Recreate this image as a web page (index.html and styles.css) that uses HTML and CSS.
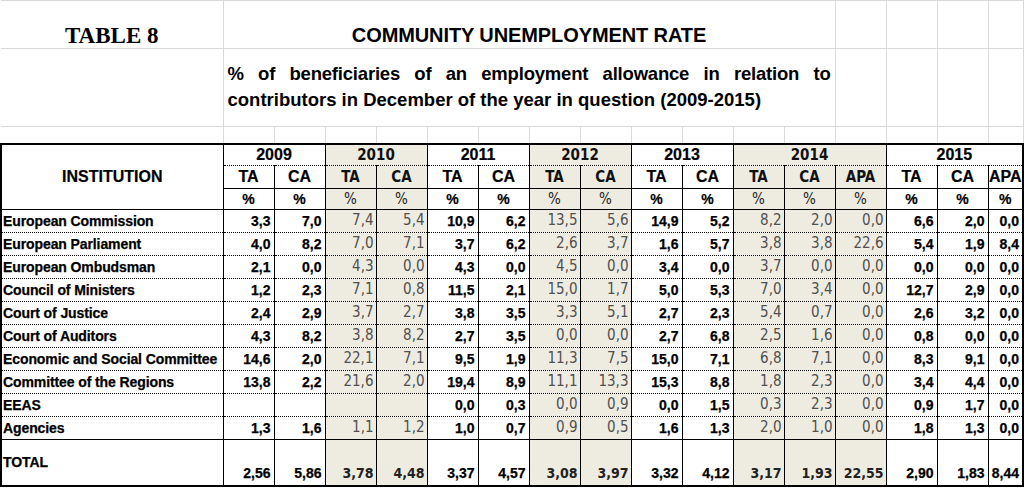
FILE: index.html
```html
<!DOCTYPE html>
<html>
<head>
<meta charset="utf-8">
<link rel="stylesheet" href="styles.css">
</head>
<body>
<table class="sheet">
<colgroup>
<col class="c-inst">
<col><col><col><col><col><col><col><col><col><col><col><col><col>
<col><col><col class="c-last">
</colgroup>
<tbody>
<tr class="r1">
<td class="label">TABLE 8</td>
<td colspan="12" class="title">COMMUNITY UNEMPLOYMENT RATE</td>
<td></td><td></td><td></td><td></td>
</tr>
<tr class="r2">
<td></td>
<td colspan="12" class="subtitle">
<span class="line1">% of beneficiaries of an employment allowance in relation to</span>
<span class="line2">contributors in December of the year in question (2009-2015)</span>
</td>
<td></td><td></td><td></td><td></td>
</tr>
<tr class="r3">
<td></td><td></td><td></td><td></td><td></td><td></td><td></td><td></td><td></td><td></td><td></td><td></td><td></td><td></td><td></td><td></td><td></td>
</tr>
<tr class="h h1">
<td rowspan="3" class="inst-head first">INSTITUTION</td>
<td colspan="2">2009</td>
<td colspan="2" class="s">2010</td>
<td colspan="2">2011</td>
<td colspan="2" class="s">2012</td>
<td colspan="2">2013</td>
<td colspan="3" class="s">2014</td>
<td colspan="3" class="last">2015</td>
</tr>
<tr class="h h2">
<td>TA</td><td>CA</td>
<td class="s">TA</td><td class="s">CA</td>
<td>TA</td><td>CA</td>
<td class="s">TA</td><td class="s">CA</td>
<td>TA</td><td>CA</td>
<td class="s">TA</td><td class="s">CA</td><td class="s">APA</td>
<td>TA</td><td>CA</td><td class="last">APA</td>
</tr>
<tr class="h h3">
<td>%</td><td>%</td>
<td class="s">%</td><td class="s">%</td>
<td>%</td><td>%</td>
<td class="s">%</td><td class="s">%</td>
<td>%</td><td>%</td>
<td class="s">%</td><td class="s">%</td><td class="s">%</td>
<td>%</td><td>%</td><td class="last">%</td>
</tr>
<tr class="d">
<td class="name first">European Commission</td>
<td>3,3</td><td>7,0</td><td class="s">7,4</td><td class="s">5,4</td><td>10,9</td><td>6,2</td><td class="s">13,5</td><td class="s">5,6</td><td>14,9</td><td>5,2</td><td class="s">8,2</td><td class="s">2,0</td><td class="s">0,0</td><td>6,6</td><td>2,0</td><td class="last">0,0</td>
</tr>
<tr class="d">
<td class="name first">European Parliament</td>
<td>4,0</td><td>8,2</td><td class="s">7,0</td><td class="s">7,1</td><td>3,7</td><td>6,2</td><td class="s">2,6</td><td class="s">3,7</td><td>1,6</td><td>5,7</td><td class="s">3,8</td><td class="s">3,8</td><td class="s">22,6</td><td>5,4</td><td>1,9</td><td class="last">8,4</td>
</tr>
<tr class="d">
<td class="name first">European Ombudsman</td>
<td>2,1</td><td>0,0</td><td class="s">4,3</td><td class="s">0,0</td><td>4,3</td><td>0,0</td><td class="s">4,5</td><td class="s">0,0</td><td>3,4</td><td>0,0</td><td class="s">3,7</td><td class="s">0,0</td><td class="s">0,0</td><td>0,0</td><td>0,0</td><td class="last">0,0</td>
</tr>
<tr class="d">
<td class="name first">Council of Ministers</td>
<td>1,2</td><td>2,3</td><td class="s">7,1</td><td class="s">0,8</td><td>11,5</td><td>2,1</td><td class="s">15,0</td><td class="s">1,7</td><td>5,0</td><td>5,3</td><td class="s">7,0</td><td class="s">3,4</td><td class="s">0,0</td><td>12,7</td><td>2,9</td><td class="last">0,0</td>
</tr>
<tr class="d">
<td class="name first">Court of Justice</td>
<td>2,4</td><td>2,9</td><td class="s">3,7</td><td class="s">2,7</td><td>3,8</td><td>3,5</td><td class="s">3,3</td><td class="s">5,1</td><td>2,7</td><td>2,3</td><td class="s">5,4</td><td class="s">0,7</td><td class="s">0,0</td><td>2,6</td><td>3,2</td><td class="last">0,0</td>
</tr>
<tr class="d">
<td class="name first">Court of Auditors</td>
<td>4,3</td><td>8,2</td><td class="s">3,8</td><td class="s">8,2</td><td>2,7</td><td>3,5</td><td class="s">0,0</td><td class="s">0,0</td><td>2,7</td><td>6,8</td><td class="s">2,5</td><td class="s">1,6</td><td class="s">0,0</td><td>0,8</td><td>0,0</td><td class="last">0,0</td>
</tr>
<tr class="d">
<td class="name first">Economic and Social Committee</td>
<td>14,6</td><td>2,0</td><td class="s">22,1</td><td class="s">7,1</td><td>9,5</td><td>1,9</td><td class="s">11,3</td><td class="s">7,5</td><td>15,0</td><td>7,1</td><td class="s">6,8</td><td class="s">7,1</td><td class="s">0,0</td><td>8,3</td><td>9,1</td><td class="last">0,0</td>
</tr>
<tr class="d">
<td class="name first">Committee of the Regions</td>
<td>13,8</td><td>2,2</td><td class="s">21,6</td><td class="s">2,0</td><td>19,4</td><td>8,9</td><td class="s">11,1</td><td class="s">13,3</td><td>15,3</td><td>8,8</td><td class="s">1,8</td><td class="s">2,3</td><td class="s">0,0</td><td>3,4</td><td>4,4</td><td class="last">0,0</td>
</tr>
<tr class="d">
<td class="name first">EEAS</td>
<td></td><td></td><td class="s"></td><td class="s"></td><td>0,0</td><td>0,3</td><td class="s">0,0</td><td class="s">0,9</td><td>0,0</td><td>1,5</td><td class="s">0,3</td><td class="s">2,3</td><td class="s">0,0</td><td>0,9</td><td>1,7</td><td class="last">0,0</td>
</tr>
<tr class="d pre-total">
<td class="name first">Agencies</td>
<td>1,3</td><td>1,6</td><td class="s">1,1</td><td class="s">1,2</td><td>1,0</td><td>0,7</td><td class="s">0,9</td><td class="s">0,5</td><td>1,6</td><td>1,3</td><td class="s">2,0</td><td class="s">1,0</td><td class="s">0,0</td><td>1,8</td><td>1,3</td><td class="last">0,0</td>
</tr>
<tr class="d total">
<td class="name first">TOTAL</td>
<td>2,56</td><td>5,86</td><td class="s">3,78</td><td class="s">4,48</td><td>3,37</td><td>4,57</td><td class="s">3,08</td><td class="s">3,97</td><td>3,32</td><td>4,12</td><td class="s">3,17</td><td class="s">1,93</td><td class="s">22,55</td><td>2,90</td><td>1,83</td><td class="last">8,44</td>
</tr>
</tbody>
</table>
</body>
</html>
```

FILE: styles.css
```css
html, body {
  margin: 0;
  padding: 0;
  background: #ffffff;
}

body {
  font-family: "Liberation Sans", Arial, sans-serif;
  color: #000;
}

.sheet {
  border-collapse: collapse;
  table-layout: fixed;
  width: 1022px;
}

.sheet col { width: 51px; }
.sheet col.c-inst { width: 222px; }
.sheet col.c-last { width: 35px; }

.sheet td {
  padding: 0;
  overflow: hidden;
  white-space: nowrap;
}

/* spreadsheet area above the table */
.r1 td, .r2 td, .r3 td {
  border: 1px solid #d9d9d9;
}
.r1 td:first-child, .r2 td:first-child, .r3 td:first-child {
  border-left: none;
}

.r1 { height: 48px; }
.r2 { height: 78px; }
.r3 { height: 17px; }

.label {
  font-family: "Liberation Serif", "Times New Roman", serif;
  font-weight: bold;
  font-size: 23px;
  line-height: 24px;
  text-align: center;
  vertical-align: bottom;
}

.title {
  font-weight: bold;
  font-size: 20px;
  line-height: 24px;
  text-align: center;
  vertical-align: bottom;
  padding-bottom: 1px !important;
  letter-spacing: -0.1px;
}

.subtitle {
  vertical-align: top;
  white-space: normal !important;
  padding: 12px 4px 0 4px !important;
  font-weight: bold;
  font-size: 18.5px;
  line-height: 26px;
}
.subtitle .line1 {
  display: block;
  text-align: justify;
  text-align-last: justify;
  letter-spacing: -0.2px;
}
.subtitle .line2 {
  display: block;
  text-align: left;
  letter-spacing: 0;
}

/* data table */
.h td, .d td {
  border-left: 1px solid #000;
  border-right: 1px solid #000;
  border-bottom: 1px dotted #000;
  font-weight: bold;
}
.h td.first, .d td.first { border-left: 2px solid #000; }
.h td.last, .d td.last { border-right: 2px solid #000; }

.h1 td { border-top: 2px solid #000; }
.h1 { height: 22px; }
.h2 { height: 23px; }
.h3 { height: 21px; }
.h2 td, .h3 td { border-bottom: 1px solid #000; }

.h td {
  text-align: center;
  vertical-align: middle;
  -webkit-text-stroke: 0.2px #000;
}
.h1 td { font-size: 16px; }
.h2 td { font-size: 16px; }
.h3 td { font-size: 14px; }

.inst-head {
  font-size: 16px !important;
  letter-spacing: 0;
  border-bottom: 1px solid #000 !important;
}

.d { height: 23px; }
.d td {
  text-align: right;
  vertical-align: bottom;
  padding: 0 3px 3px 0;
  font-size: 14px;
  -webkit-text-stroke: 0.25px #000;
}

.d td.name {
  text-align: left;
  padding-left: 1px;
  font-size: 14px;
  letter-spacing: -0.1px;
}

.d td.s, .h td.s {
  background: #eeece1;
}
.d td.s, .h td.s {
  font-family: "DejaVu Sans Condensed", "Liberation Sans", sans-serif;
  -webkit-text-stroke: 0;
}
.d td.s {
  font-weight: normal;
  color: #505050;
  font-size: 15px;
  padding-right: 2px;
}
.h1 td.s, .h2 td.s { font-size: 15px; color: #111; }
.h3 td.s { font-weight: normal; font-size: 15px; color: #222; }

.pre-total td { border-bottom: 1px solid #000; }

.total { height: 46px; }
.total td {
  border-bottom: 2px solid #000;
  padding-bottom: 4px;
}
.total td.s {
  font-weight: bold;
  color: #222;
  font-size: 14px;
}
.total td.name {
  vertical-align: top;
  padding-top: 14px;
}
```
